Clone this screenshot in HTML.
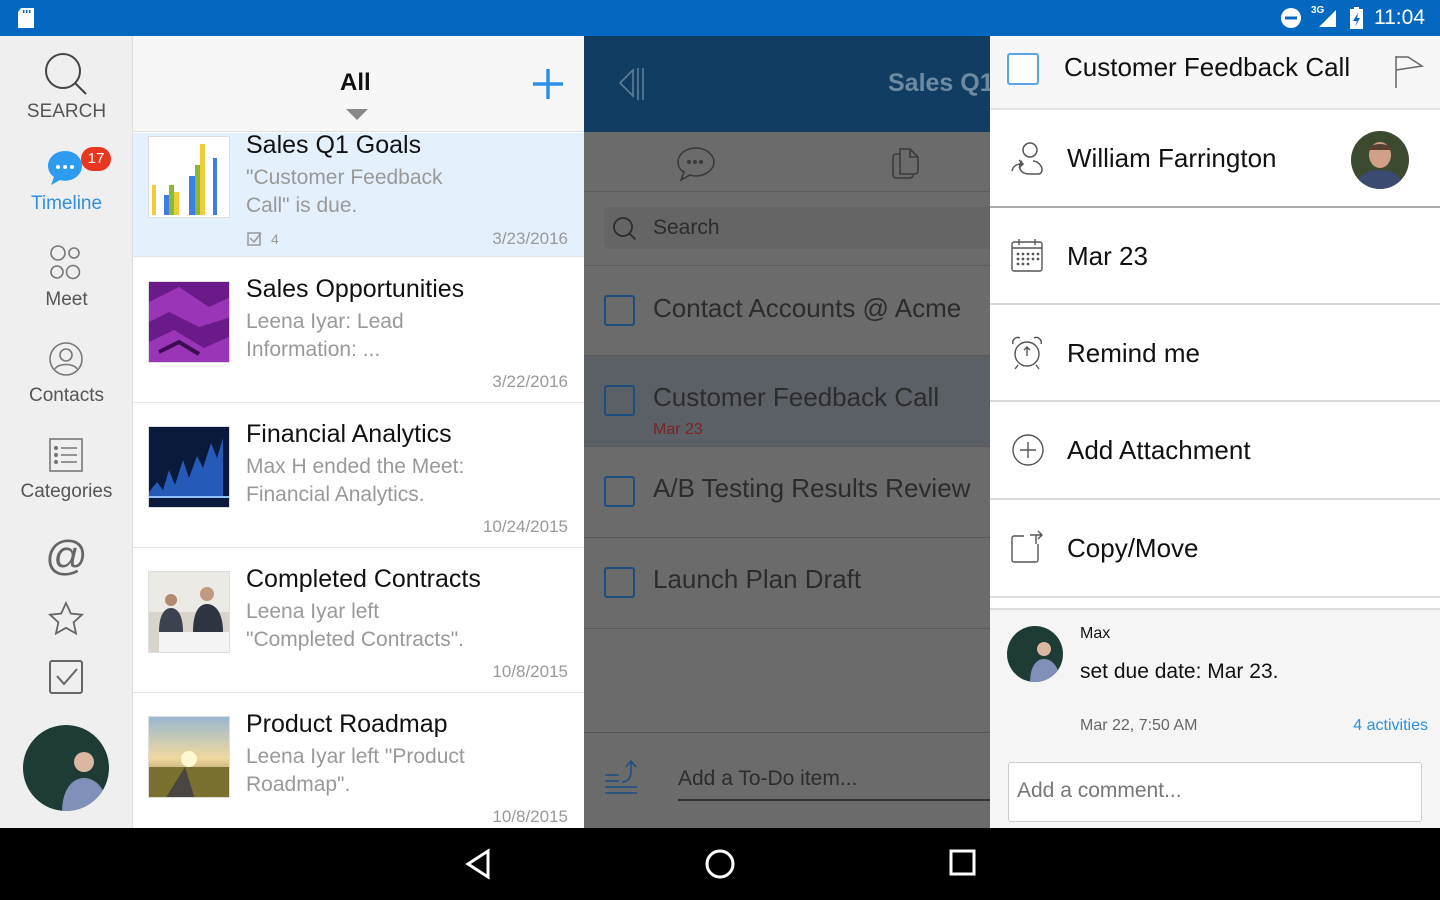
<!DOCTYPE html>
<html><head><meta charset="utf-8"><style>
*{margin:0;padding:0;box-sizing:border-box}
body{width:1440px;height:900px;overflow:hidden;font-family:"Liberation Sans",sans-serif;position:relative;background:#fff}
.abs{position:absolute}
.sb{top:0;left:0;width:1440px;height:36px;background:#0468c1;color:#fff}
.side{top:36px;left:0;width:133px;height:792px;background:#efefef;border-right:1px solid #ddd}
.side .lbl{position:absolute;width:133px;text-align:center;font-size:19px;color:#555}
.list{top:36px;left:133px;width:451px;height:792px;background:#fff}
.item{position:absolute;left:0;width:451px;height:145px;border-bottom:1px solid #e6e6e6}
.item .th{position:absolute;left:15px;top:13px;width:82px;height:82px;border:1px solid #ddd;background:#fff;overflow:hidden}
.item .t{position:absolute;left:113px;top:10px;font-size:25px;color:#111;white-space:nowrap}
.item .s{position:absolute;left:113px;top:44px;font-size:21px;color:#999;line-height:28px;width:300px}
.item .d{position:absolute;right:16px;font-size:17px;color:#999}
.mid{top:36px;left:584px;width:406px;height:792px;background:#6b6b6b;overflow:hidden}
.row{position:absolute;left:0;width:406px;height:91px;border-bottom:1px solid #5a5a5a}
.cb{position:absolute;left:20px;width:31px;height:31px;border:2px solid #1d4e80;border-radius:3px}
.row .tx{position:absolute;left:69px;font-size:26px;color:#2c2c2c;white-space:nowrap}
.right{top:36px;left:990px;width:450px;height:792px;background:#fff}
.rr{position:absolute;left:0;width:450px;height:98px;border-bottom:2px solid #d8d8d8}
.rr .tx{position:absolute;left:77px;top:33px;font-size:26px;color:#111;white-space:nowrap}
.rr svg{position:absolute;left:20px;top:30px}
.nav{top:828px;left:0;width:1440px;height:72px;background:#000}
</style></head><body>
<div class="abs sb">
<svg class="abs" style="left:16px;top:7px" width="20" height="22"><path d="M5 1h13v20H2V5z" fill="#fff"/><rect x="7" y="3" width="1.5" height="3" fill="#0468c1"/><rect x="10" y="3" width="1.5" height="3" fill="#0468c1"/><rect x="13" y="3" width="1.5" height="3" fill="#0468c1"/></svg>
<svg class="abs" style="left:1280px;top:7px" width="22" height="22"><circle cx="11" cy="11" r="10" fill="#fff"/><rect x="5" y="9.5" width="12" height="3" fill="#0468c1"/></svg>
<div class="abs" style="left:1311px;top:5px;font-size:10px;font-weight:bold">3G</div>
<svg class="abs" style="left:1316px;top:8px" width="22" height="20"><path d="M20 2V19H3z" fill="#fff"/></svg>
<svg class="abs" style="left:1349px;top:6px" width="16" height="24"><rect x="1" y="3" width="13" height="20" fill="#fff"/><rect x="5" y="1" width="5" height="3" fill="#fff"/><path d="M9 7L4 15h4l-2 6 5-9H8z" fill="#0468c1"/></svg>
<div class="abs" style="left:1374px;top:6px;font-size:21px">11:04</div>
</div>

<div class="abs side">
<svg class="abs" style="left:43px;top:15px" width="46" height="46" fill="none" stroke="#444" stroke-width="2"><circle cx="20" cy="20" r="17"/><path d="M32 32l11 11"/></svg>
<div class="lbl" style="top:65px">SEARCH</div>
<svg class="abs" style="left:45px;top:112px" width="40" height="40"><path d="M20 3C10 3 3 10 3 18c0 5 3 9 6 11l-3 8 9-5c2 .6 3.5 .8 5 .8 10 0 17-7 17-15S30 3 20 3z" fill="#2d9cf0"/><circle cx="13" cy="19" r="2" fill="#fff"/><circle cx="20" cy="19" r="2" fill="#fff"/><circle cx="27" cy="19" r="2" fill="#fff"/></svg>
<div class="abs" style="left:81px;top:111px;width:30px;height:24px;border-radius:12px;background:#e8371f;color:#fff;font-size:15px;text-align:center;line-height:24px">17</div>
<div class="lbl" style="top:157px;color:#2d90e0">Timeline</div>
<svg class="abs" style="left:48px;top:208px" width="36" height="36" fill="none" stroke="#777" stroke-width="1.6"><circle cx="10" cy="9" r="7"/><circle cx="26" cy="9" r="5"/><circle cx="9" cy="28" r="6"/><circle cx="25" cy="28" r="6.5"/></svg>
<div class="lbl" style="top:253px">Meet</div>
<svg class="abs" style="left:48px;top:305px" width="36" height="36" fill="none" stroke="#777" stroke-width="1.6"><circle cx="18" cy="18" r="16"/><circle cx="18" cy="14" r="6"/><path d="M7 28c3-6 19-6 22 0"/></svg>
<div class="lbl" style="top:349px">Contacts</div>
<svg class="abs" style="left:49px;top:402px" width="34" height="34" fill="none" stroke="#777" stroke-width="1.6"><rect x="1" y="1" width="32" height="32"/><path d="M12 10h16M12 17h16M12 24h16"/><circle cx="7" cy="10" r="1.3" fill="#777"/><circle cx="7" cy="17" r="1.3" fill="#777"/><circle cx="7" cy="24" r="1.3" fill="#777"/></svg>
<div class="lbl" style="top:445px">Categories</div>
<div class="lbl" style="top:496px;font-size:42px;color:#666">@</div>
<svg class="abs" style="left:48px;top:565px" width="36" height="36" fill="none" stroke="#666" stroke-width="1.8"><path d="M18 2l4.8 10.5 11.2 1.2-8.4 7.6 2.4 11.2L18 26.8 8 32.5l2.4-11.2L2 13.7l11.2-1.2z"/></svg>
<svg class="abs" style="left:49px;top:624px" width="34" height="34" fill="none" stroke="#666" stroke-width="2"><rect x="1" y="1" width="32" height="32" rx="2"/><path d="M8 16l7 8 13-15"/></svg>
<svg class="abs" style="left:22px;top:688px" width="88" height="88"><defs><clipPath id="c1"><circle cx="44" cy="44" r="43"/></clipPath></defs><g clip-path="url(#c1)"><rect width="88" height="88" fill="#1f3b35"/><circle cx="62" cy="38" r="10" fill="#d9b7a0"/><path d="M40 88c0-22 10-34 22-34s24 12 24 34z" fill="#8090b8"/></g></svg>
</div>

<div class="abs list">
<div class="abs" style="left:0;top:0;width:451px;height:96px;background:#f7f7f7;border-bottom:1px solid #ddd"></div>
<div class="abs" style="left:207px;top:33px;font-size:24px;font-weight:bold;color:#111">All</div>
<svg class="abs" style="left:213px;top:73px" width="22" height="12"><path d="M0 0h22L11 11z" fill="#888"/></svg>
<svg class="abs" style="left:398px;top:31px" width="34" height="34"><path d="M17 2v30M2 17h30" stroke="#2d90e8" stroke-width="3.5"/></svg>

<div class="item" style="top:97px;height:124px;background:#e4f1fd">
<div class="th" style="top:3px"><svg width="82" height="82"><rect x="3" y="48" width="4" height="30" fill="#f0cc3a"/><rect x="15" y="58" width="5" height="20" fill="#3f7de0"/><rect x="20" y="48" width="5" height="30" fill="#86b936"/><rect x="25" y="55" width="5" height="23" fill="#f0cc3a"/><rect x="40" y="39" width="6" height="39" fill="#3f7de0"/><rect x="46" y="28" width="5" height="50" fill="#86b936"/><rect x="51" y="7" width="5" height="71" fill="#f0cc3a"/><rect x="64" y="21" width="4" height="57" fill="#3f7de0"/></svg></div>
<div class="t" style="top:-2px">Sales Q1 Goals</div>
<div class="s" style="top:31px">"Customer Feedback<br>Call" is due.</div>
<svg class="abs" style="left:114px;top:98px" width="15" height="15" fill="none" stroke="#999" stroke-width="1.5"><rect x="1" y="2" width="12" height="12"/><path d="M3 7l4 4 7-9"/></svg>
<div class="abs" style="left:138px;top:98px;font-size:14px;color:#999">4</div>
<div class="d" style="top:96px">3/23/2016</div>
</div>

<div class="item" style="top:222px">
<div class="th" style="top:23px"><svg width="82" height="82"><rect width="82" height="82" fill="#6b1a8a"/><path d="M0 20l30-15 30 20 22-10v20L50 45 20 30 0 40zM0 60l25-12 30 18 27-12v28H0z" fill="#9a35b8"/><path d="M10 70l20-10 20 12" stroke="#3d0c52" stroke-width="4" fill="none"/></svg></div>
<div class="t" style="top:17px">Sales Opportunities</div>
<div class="s" style="top:50px">Leena Iyar: Lead<br>Information: ...</div>
<div class="d" style="top:114px">3/22/2016</div>
</div>

<div class="item" style="top:367px">
<div class="th" style="top:23px"><svg width="82" height="82"><rect width="82" height="82" fill="#0a1a3a"/><path d="M0 65l8-10 6 8 6-20 6 15 8-25 6 18 8-22 6 12 8-25 6 15 6-20v60H0z" fill="#2d6ad8" opacity=".8"/><path d="M0 70h82" stroke="#8fc0ff" stroke-width="2"/></svg></div>
<div class="t" style="top:17px">Financial Analytics</div>
<div class="s" style="top:50px">Max H ended the Meet:<br>Financial Analytics.</div>
<div class="d" style="top:114px">10/24/2015</div>
</div>

<div class="item" style="top:512px">
<div class="th" style="top:23px"><svg width="82" height="82"><rect width="82" height="82" fill="#d8d4cc"/><rect x="0" y="0" width="82" height="40" fill="#eceae4"/><circle cx="58" cy="22" r="7" fill="#c09a80"/><path d="M44 60c0-20 6-28 14-28s16 8 16 28z" fill="#2e3440"/><circle cx="22" cy="28" r="6" fill="#b08a70"/><path d="M10 60c0-18 6-24 12-24s12 6 12 24z" fill="#3c4250"/><rect x="10" y="60" width="70" height="22" fill="#f4f4f4"/></svg></div>
<div class="t" style="top:17px">Completed Contracts</div>
<div class="s" style="top:50px">Leena Iyar left<br>"Completed Contracts".</div>
<div class="d" style="top:114px">10/8/2015</div>
</div>

<div class="item" style="top:657px;border:none">
<div class="th" style="top:23px"><svg width="82" height="82"><defs><linearGradient id="sky" x1="0" y1="0" x2="0" y2="1"><stop offset="0" stop-color="#9ab8d0"/><stop offset=".5" stop-color="#f0d8a0"/><stop offset="1" stop-color="#6a5a30"/></linearGradient></defs><rect width="82" height="82" fill="url(#sky)"/><circle cx="40" cy="42" r="8" fill="#fff8d0"/><path d="M0 50h82v32H0z" fill="#7a7030"/><path d="M36 50l-20 32h30z" fill="#4a4540"/></svg></div>
<div class="t" style="top:17px">Product Roadmap</div>
<div class="s" style="top:50px">Leena Iyar left "Product<br>Roadmap".</div>
<div class="d" style="top:114px">10/8/2015</div>
</div>
</div>

<div class="abs mid">
<div class="abs" style="left:0;top:0;width:406px;height:96px;background:#123d62"></div>
<svg class="abs" style="left:34px;top:30px" width="30" height="36" fill="none" stroke="#5d7d99" stroke-width="1.6"><path d="M15 4L2 17l13 13z"/><path d="M20 2v32M25 2v32"/></svg>
<div class="abs" style="left:304px;top:33px;font-size:25px;font-weight:bold;color:#6d8aa3;white-space:nowrap">Sales Q1</div>
<div class="abs" style="left:0;top:96px;width:406px;height:60px;border-bottom:1px solid #5c5c5c"></div>
<svg class="abs" style="left:92px;top:110px" width="40" height="36" fill="none" stroke="#3a3a3a" stroke-width="1.6"><path d="M20 2C10 2 2 8 2 16c0 4 2 8 6 10l-3 8 9-5c2 .6 4 1 6 1 10 0 18-7 18-14S30 2 20 2z"/><circle cx="13" cy="16" r="1.3" fill="#3a3a3a"/><circle cx="19" cy="16" r="1.3" fill="#3a3a3a"/><circle cx="25" cy="16" r="1.3" fill="#3a3a3a"/></svg>
<svg class="abs" style="left:307px;top:109px" width="32" height="36" fill="none" stroke="#3a3a3a" stroke-width="1.6"><path d="M9 4h10l8 8v14a3 3 0 0 1-3 3H9z"/><path d="M19 4v8h8"/><path d="M9 9H5a3 3 0 0 0-3 3v18a3 3 0 0 0 3 3h14a3 3 0 0 0 3-3"/></svg>
<div class="abs" style="left:20px;top:171px;width:400px;height:42px;background:#656565;border-radius:6px"></div>
<svg class="abs" style="left:28px;top:180px" width="26" height="26" fill="none" stroke="#2c2c2c" stroke-width="1.8"><circle cx="11" cy="11" r="9"/><path d="M17.5 17.5l6 6"/></svg>
<div class="abs" style="left:69px;top:180px;font-size:21px;color:#2c2c2c">Search</div>
<div class="row" style="top:229px;border-top:1px solid #5e5e5e"><div class="cb" style="top:29px"></div><div class="tx" style="top:27px">Contact Accounts @ Acme</div></div>
<div class="row" style="top:320px;background:#5b5f66"><div class="cb" style="top:29px"></div><div class="tx" style="top:26px">Customer Feedback Call</div><div class="abs" style="left:69px;top:65px;font-size:16px;color:#7a2424">Mar 23</div></div>
<div class="row" style="top:411px"><div class="cb" style="top:29px"></div><div class="tx" style="top:26px">A/B Testing Results Review</div></div>
<div class="row" style="top:502px"><div class="cb" style="top:29px"></div><div class="tx" style="top:26px">Launch Plan Draft</div></div>
<div class="abs" style="left:0;top:696px;width:406px;height:1px;background:#555"></div>
<svg class="abs" style="left:20px;top:722px" width="44" height="40" fill="none" stroke="#1d4e80" stroke-width="1.6"><path d="M1 17h14M1 23h14M1 29h32M1 35h32"/><path d="M18 24c6 0 9-4 9-12V4M22 9l5-6 5 6"/></svg>
<div class="abs" style="left:94px;top:731px;font-size:21px;color:#2c2c2c">Add a To-Do item...</div>
<div class="abs" style="left:94px;top:763px;width:320px;height:2px;background:#333"></div>
</div>

<div class="abs right">
<div class="abs" style="left:0;top:0;width:450px;height:74px;background:#f7f7f7;border-bottom:2px solid #e4e4e4"></div>
<div class="abs" style="left:17px;top:17px;width:32px;height:32px;border:2px solid #5aa3e8;border-radius:3px;background:#fff"></div>
<div class="abs" style="left:74px;top:16px;font-size:26px;color:#111;white-space:nowrap">Customer Feedback Call</div>
<svg class="abs" style="left:404px;top:18px" width="32" height="34" fill="none" stroke="#666" stroke-width="1.5"><path d="M2 2v32M2 3h12l14 9-26 4"/></svg>

<div class="rr" style="top:74px;height:98px;border-bottom-color:#aaa"><svg width="36" height="36" fill="none" stroke="#555" stroke-width="1.5" style="top:31px"><circle cx="20" cy="9" r="7"/><path d="M12 20c-4 3-4 13 8 13h8c4 0 5-4 3-8-2-3-5-5-8-5"/><path d="M2 30c1-5 4-7 10-7M9 19l4 4-4 4"/></svg><div class="tx">William Farrington</div>
<svg width="60" height="60" style="left:360px;top:20px"><defs><clipPath id="c2"><circle cx="30" cy="30" r="29"/></clipPath></defs><g clip-path="url(#c2)"><rect width="60" height="60" fill="#3c4a30"/><path d="M5 60c2-15 12-20 25-20s23 5 25 20z" fill="#3a4a70"/><ellipse cx="30" cy="25" rx="11" ry="13" fill="#d0a088"/><path d="M19 20c0-8 22-8 22 0" fill="#5a4030"/></g></svg></div>
<div class="rr" style="top:172px;height:97px"><svg width="36" height="36" fill="none" stroke="#555" stroke-width="1.4"><rect x="2" y="4" width="30" height="29" rx="2"/><path d="M2 10h30M9 1v6M25 1v6"/><g fill="#555" stroke="none"><circle cx="8" cy="16" r="1.4"/><circle cx="13" cy="16" r="1.4"/><circle cx="18" cy="16" r="1.4"/><circle cx="23" cy="16" r="1.4"/><circle cx="28" cy="16" r="1.4"/><circle cx="8" cy="21" r="1.4"/><circle cx="13" cy="21" r="1.4"/><circle cx="18" cy="21" r="1.4"/><circle cx="23" cy="21" r="1.4"/><circle cx="28" cy="21" r="1.4"/><circle cx="8" cy="26" r="1.4"/><circle cx="13" cy="26" r="1.4"/><circle cx="18" cy="26" r="1.4"/></g></svg><div class="tx">Mar 23</div></div>
<div class="rr" style="top:269px;height:97px"><svg width="36" height="36" fill="none" stroke="#555" stroke-width="1.4"><circle cx="17" cy="19" r="12"/><path d="M17 12v9M14 15l3-3 3 3M3 9a5 5 0 0 1 7-6M31 9a5 5 0 0 0-7-6M8 30l-3 4M26 30l3 4"/></svg><div class="tx">Remind me</div></div>
<div class="rr" style="top:366px;height:98px"><svg width="36" height="36" fill="none" stroke="#555" stroke-width="1.4"><circle cx="18" cy="18" r="15"/><path d="M18 10v16M10 18h16"/></svg><div class="tx">Add Attachment</div></div>
<div class="rr" style="top:464px;height:98px;border-bottom-color:#ddd"><svg width="36" height="36" fill="none" stroke="#555" stroke-width="1.4"><path d="M14 6H4a2 2 0 0 0-2 2v22a2 2 0 0 0 2 2h22a2 2 0 0 0 2-2V14M20 5h12M28 1l4 4-4 4"/><path d="M26 5v9"/></svg><div class="tx">Copy/Move</div></div>

<div class="abs" style="left:0;top:572px;width:450px;height:220px;background:#f5f5f5;border-top:2px solid #ddd"></div>
<svg class="abs" style="left:16px;top:589px" width="58" height="58"><defs><clipPath id="c3"><circle cx="29" cy="29" r="28"/></clipPath></defs><g clip-path="url(#c3)"><rect width="58" height="58" fill="#1f3b35"/><circle cx="38" cy="24" r="7" fill="#d9b7a0"/><path d="M24 58c0-16 6-24 14-24s16 8 16 24z" fill="#8090b8"/></g></svg>
<div class="abs" style="left:90px;top:589px;font-size:16px;color:#111">Max</div>
<div class="abs" style="left:90px;top:624px;font-size:21px;color:#111">set due date: Mar 23.</div>
<div class="abs" style="left:90px;top:681px;font-size:16px;color:#666">Mar 22, 7:50 AM</div>
<div class="abs" style="right:12px;top:681px;font-size:16px;color:#2d90e0">4 activities</div>
<div class="abs" style="left:18px;top:726px;width:414px;height:60px;background:#fff;border:1.5px solid #ccc;border-radius:3px"></div>
<div class="abs" style="left:27px;top:743px;font-size:21px;color:#777">Add a comment...</div>
</div>

<div class="abs nav">
<svg class="abs" style="left:464px;top:20px" width="28" height="32" fill="none" stroke="#fff" stroke-width="3"><path d="M24 3L4 16l20 13z"/></svg>
<svg class="abs" style="left:704px;top:20px" width="32" height="32" fill="none" stroke="#fff" stroke-width="3"><circle cx="16" cy="16" r="13"/></svg>
<svg class="abs" style="left:948px;top:20px" width="30" height="30" fill="none" stroke="#fff" stroke-width="3"><rect x="3" y="3" width="23" height="23"/></svg>
</div>
</body></html>
